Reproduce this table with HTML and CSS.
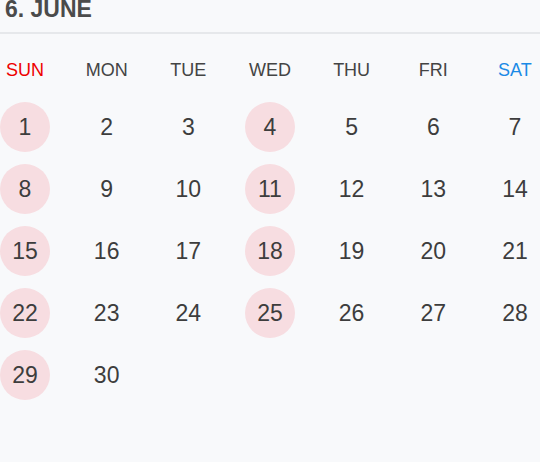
FILE: index.html
```html
<!DOCTYPE html>
<html>
<head>
<meta charset="utf-8">
<link rel="stylesheet" href="styles.css">
</head>
<body>
<div class="cal">
  <div class="head"><h1 class="title">6. JUNE</h1></div>
  <div class="row weekdays">
    <div class="cell sun">SUN</div>
    <div class="cell">MON</div>
    <div class="cell">TUE</div>
    <div class="cell">WED</div>
    <div class="cell">THU</div>
    <div class="cell">FRI</div>
    <div class="cell sat">SAT</div>
  </div>
  <div class="days">
    <div class="row"><div class="cell day hl">1</div><div class="cell day">2</div><div class="cell day">3</div><div class="cell day hl">4</div><div class="cell day">5</div><div class="cell day">6</div><div class="cell day">7</div></div>
    <div class="row"><div class="cell day hl">8</div><div class="cell day">9</div><div class="cell day">10</div><div class="cell day hl">11</div><div class="cell day">12</div><div class="cell day">13</div><div class="cell day">14</div></div>
    <div class="row"><div class="cell day hl">15</div><div class="cell day">16</div><div class="cell day">17</div><div class="cell day hl">18</div><div class="cell day">19</div><div class="cell day">20</div><div class="cell day">21</div></div>
    <div class="row"><div class="cell day hl">22</div><div class="cell day">23</div><div class="cell day">24</div><div class="cell day hl">25</div><div class="cell day">26</div><div class="cell day">27</div><div class="cell day">28</div></div>
    <div class="row"><div class="cell day hl">29</div><div class="cell day">30</div><div class="cell day"></div><div class="cell day"></div><div class="cell day"></div><div class="cell day"></div><div class="cell day"></div></div>
  </div>
</div>
</body>
</html>
```
FILE: styles.css
```css
html, body {
  margin: 0;
  padding: 0;
  background: #f8f9fb;
  height: 100%;
}
body {
  font-family: "Liberation Sans", Arial, sans-serif;
  color: #3f3f3f;
  overflow: hidden;
}
.head {
  height: 32px;
  border-bottom: 2px solid #e6e8eb;
}
.title {
  margin: 0 0 0 5px;
  font-size: 23px;
  line-height: 18px;
  font-weight: bold;
  color: #4b4b4b;
}
.row {
  display: flex;
  justify-content: space-between;
}
.cell {
  width: 50px;
  display: flex;
  justify-content: center;
  align-items: center;
}
.weekdays {
  margin-top: 26px;
  font-size: 18px;
  line-height: 20px;
  color: #444;
}
.sun { color: #ee0000; }
.sat { color: #1a8ae6; }
.days {
  margin-top: 22px;
  display: flex;
  flex-direction: column;
  gap: 12px;
}
.day {
  height: 50px;
  border-radius: 50%;
  font-size: 23px;
  color: #3d3d3d;
}
.hl {
  background: #f7dde1;
}
```
